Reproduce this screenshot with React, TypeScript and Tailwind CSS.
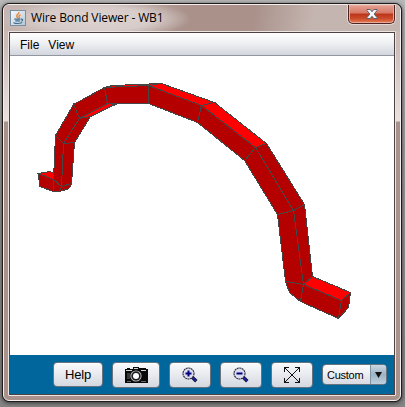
import React from "react";

function JavaIcon() {
  return (
    <svg className="h-4 w-4 shrink-0" viewBox="0 0 16 16" shapeRendering="geometricPrecision">
      <defs>
        <linearGradient id="tile" x1="0" y1="0" x2="1" y2="1">
          <stop offset="0" stopColor="#f8fafc" />
          <stop offset="1" stopColor="#b4c5d2" />
        </linearGradient>
      </defs>
      <rect x="0.5" y="0.5" width="15" height="15" fill="url(#tile)" stroke="#7890a3" />
      <path d="M9 2c.5 1.700-2.600 2.500-2.300 4 .1.900 1 1.300 1 2.300M10.600 4.800c-1.600.6-2 1.300-1.500 2 .5.700.4 1.100-.4 1.700" fill="none" stroke="#e8802b" strokeWidth="1.300" />
      <path d="M4.300 9.200h6.200M5.300 10.900h4.600M11 9.200c2.200-.4 2.100 1.500.2 2M3.400 12.700c2.200.9 6.400.8 8.800-.2" fill="none" stroke="#426f91" strokeWidth="1.200" />
    </svg>
  );
}

const wireFaces: [string, string][] = [
  ["38,173 49,171 54,173 53,179", "#ff0000"],
  ["38,173 53,179 61,186 71,183 69,188 59,191 53,191 39,186", "#b50000"],
  ["55,135 63,143 74,142 71,183 61,186 53,179", "#b50000"],
  ["73,104 79,118 90,116 74,142 63,143 55,135", "#b50000"],
  ["79,118 107,103 115,104 90,116", "#ff0000"],
  ["73,104 104,87 107,103 79,118", "#b50000"],
  ["104,87 148,85 148,103 107,103", "#b50000"],
  ["104,87 112,85 161,83 148,85", "#ff0000"],
  ["148,85 161,83 214,102 201,105", "#ff0000"],
  ["148,85 201,105 197,122 148,103", "#b50000"],
  ["201,105 214,102 266,143 255,147", "#ff0000"],
  ["201,105 255,147 244,160 197,122", "#b50000"],
  ["255,147 266,143 304,204 293,210", "#b50000"],
  ["255,147 293,210 277,214 244,160", "#b50000"],
  ["293,210 304,204 312,276 303,284", "#b50000"],
  ["293,210 303,284 285,281 277,214", "#b50000"],
  ["285,281 303,284 300,301 289,292", "#b50000"],
  ["303,284 312,276 350,292 341,300", "#ff0000"],
  ["303,284 341,300 338,318 300,301", "#b50000"],
  ["341,300 350,292 348,307 338,318", "#b50000"],
];

function Wire() {
  return (
    <svg className="block h-[299px] w-[384px]" viewBox="9.500 55.500 384 299" shapeRendering="crispEdges">
      {wireFaces.map(([points, fill]) => (
        <polygon key={points} points={points} fill={fill} stroke="#464646" strokeWidth="1" />
      ))}
      <path d="M53 179V191M61 186L59 191M61 186L63 143L79 118" stroke="#464646" fill="none" />
    </svg>
  );
}

function CameraIcon() {
  return (
    <svg className="h-[18px] w-6" viewBox="0 0 24 18" shapeRendering="crispEdges">
      <path d="M1 3h2V2h3v1h3V1h6v1h7v1h2v14H1z" fill="#080808" />
      <path d="M2 4.500h6M17 4.500h5M10 2.500h4" stroke="#d4d4d4" />
      <path d="M3 15.500h4M17 15.500h5" stroke="#666" />
      <path d="M3 7h3v6H3z" fill="#383838" />
      <g shapeRendering="geometricPrecision">
        <circle cx="12" cy="10" r="5.600" fill="#c4c4c4" />
        <circle cx="12" cy="10" r="4.700" fill="#202020" />
        <circle cx="12" cy="10" r="3" fill="#fff" />
      </g>
    </svg>
  );
}

function Magnifier({ plus = false }: { plus?: boolean }) {
  return (
    <svg className="h-4 w-4" viewBox="0 0 16 16">
      <path d="M10 10L14.300 14.300" stroke="#14143c" strokeWidth="3.400" />
      <path d="M10.500 10.500L14 14" stroke="#2222a8" strokeWidth="1.600" />
      <circle cx="6.500" cy="6.500" r="5.500" fill="#dcdcf0" stroke="#2a2a34" strokeWidth="1.100" strokeDasharray="2 .5" />
      <path d={plus ? "M3.500 6.500h6M6.500 3.500v6" : "M3.500 6.500h6"} stroke="#00007c" strokeWidth="2" />
    </svg>
  );
}

function ExpandIcon() {
  return (
    <svg className="h-4 w-4" viewBox="0 0 16 16" shapeRendering="crispEdges">
      <path d="M.5 5V.5H5M11 .5h4.500V5M15.500 11v4.500H11M5 15.500H.5V11M.5.5l15 15M15.500.5l-15 15" fill="none" stroke="#111" />
    </svg>
  );
}

const button =
  "flex shrink-0 items-center justify-center rounded-[4px] border border-[#69737e] bg-linear-to-b from-[#fafafb] via-[#e8eaef] to-[#d5d8e0] shadow-[inset_0_1px_0_#fff]";

export default function App() {
  return (
    <div className="h-[407px] w-[405px] bg-linear-to-b from-[#b8b8b8] via-[#999] to-[#858585] pt-[3px] pl-[2px] font-['Liberation_Sans',sans-serif] text-black">
      <div className="h-[399px] w-[400px] rounded-[7px] border border-[#201b1b] bg-[#201b1b] shadow-[0_1px_4px_#333]">
        <div className="flex h-[397px] w-[398px] flex-col rounded-[6px] border border-[#f4eeec] bg-[linear-gradient(180deg,#c5b5b1_0px,#cbbcb8_40px,#e9e1df_116px,#a8928b_117px,#a8928b_100%)]">
          <header className="flex h-[26px] shrink-0 rounded-t-[5px] bg-[radial-gradient(ellipse_95px_20px_at_92px_14px,#ddd3d0_0%,#d6cbc8_60%,transparent_100%),linear-gradient(100deg,#c5b4b0_0%,#c5b4b0_12%,#b39d97_36%,#aa928b_46%,#aa928b_63%,#c5b5b1_78%,#c5b5b1_100%)]">
            <div className="flex h-[26px] flex-1 items-center pl-[6px]">
              <JavaIcon />
              <span className="ml-[5px] text-[12px] leading-4 tracking-[-0.13px] whitespace-nowrap font-['Open_Sans','Noto_Sans',sans-serif]">Wire Bond Viewer - WB1</span>
            </div>
            <button aria-label="Close" className="mr-[5px] flex h-[19px] w-[47px] items-center justify-center rounded-b-[5px] border border-t-0 border-[#4c2522] bg-[linear-gradient(180deg,#e5a294_0%,#d77866_45%,#bb3419_50%,#cc4b2b_75%,#e77e57_100%)] shadow-[inset_0_0_0_1px_#eba99a,0_0_0_1px_#e4d8d5]">
              <svg className="h-[10px] w-3" viewBox="0 0 12 10">
                <path d="M1 .5h3.200L6 2.700 7.800.5H11v1L8.200 5 11 8.500v1H7.800L6 7.300 4.200 9.500H1v-1L3.800 5 1 1.500z" fill="#f5f5f5" stroke="#59626f" />
              </svg>
            </button>
          </header>

          <main className="ml-[4px] flex h-[365px] w-[388px] shrink-0 flex-col rounded-[1px] border border-[#ece5e2]">
            <div className="flex h-[363px] w-[386px] flex-col border border-[#4d4241] bg-white">
              <nav className="flex h-[23px] shrink-0 items-center gap-[9px] border-b border-[#91969f] bg-linear-to-b from-white via-[#eceef1] to-[#d3d6de] pt-[2px] pl-[10px] text-[12px]">
                <span>File</span>
                <span>View</span>
              </nav>
              <Wire />
              <footer className="flex h-[39px] shrink-0 items-center bg-[#00669b] pl-[43px]">
                <button className={`${button} h-[25px] w-[50px] pt-px text-[13px] tracking-[-0.15px]`}>Help</button>
                <button aria-label="Camera" className={`${button} ml-[9px] h-[26px] w-12`}><CameraIcon /></button>
                <button aria-label="Zoom in" className={`${button} ml-[9px] h-[26px] w-[42px]`}><Magnifier plus /></button>
                <button aria-label="Zoom out" className={`${button} ml-[9px] h-[26px] w-[42px]`}><Magnifier /></button>
                <button aria-label="Fit" className={`${button} ml-[9px] h-[26px] w-[42px]`}><ExpandIcon /></button>
                <button className="ml-[9px] flex h-[21px] w-[65px] shrink-0 overflow-hidden rounded-[4px] border border-[#69737e] bg-linear-to-b from-white to-[#d8dae2] text-[11px] tracking-[-0.25px]">
                  <span className="flex h-full flex-1 items-center pt-px pl-[4px]">Custom</span>
                  <span className="flex h-full w-[16px] items-center justify-center border-l border-[#7c93a6] bg-linear-to-b from-[#cad8e3] via-[#9eb3c4] to-[#bdd0df]">
                    <svg className="h-[6px] w-[7px]" viewBox="0 0 7 6"><path d="M0 0h7L3.500 6z" fill="#111" /></svg>
                  </span>
                </button>
              </footer>
            </div>
          </main>
        </div>
      </div>
    </div>
  );
}
